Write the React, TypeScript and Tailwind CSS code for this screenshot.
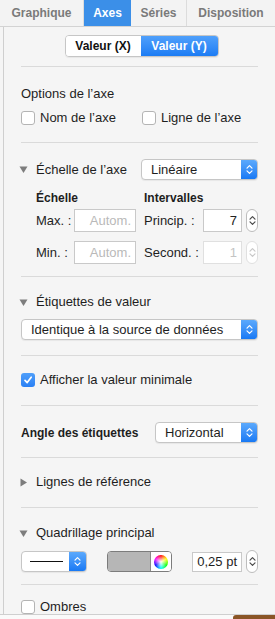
import React from "react";

const Chevrons = ({ color = "white" }: { color?: string }) => (
  <svg width="7" height="11" viewBox="0 0 7 11">
    <path d="M1 4.2 L3.5 1.7 L6 4.2 M1 6.8 L3.5 9.3 L6 6.8" stroke={color} strokeWidth="1.2" fill="none" strokeLinecap="round" strokeLinejoin="round" />
  </svg>
);

const Triangle = ({ right = false }: { right?: boolean }) => (
  <svg width="9" height="9" viewBox="0 0 9 9" className="shrink-0">
    {right ? <path d="M1.5 0.5 L8 4.5 L1.5 8.5 Z" fill="#7d7d7d" /> : <path d="M0.5 1.5 L8.5 1.5 L4.5 8 Z" fill="#7d7d7d" />}
  </svg>
);

const Sep = () => <div className="h-px bg-[#dadada]" />;

const Select = ({ label, className }: { label: string; className: string }) => (
  <div className={`flex h-[21px] rounded-[4px] border border-[#c6c6c6] bg-white shadow-[0_1px_1px_rgba(0,0,0,0.06)] overflow-hidden ${className}`}>
    <span className="flex-1 pl-[9px] leading-[19px] text-[13px] text-[#1e1e1e] whitespace-nowrap">{label}</span>
    <div className="w-[16px] bg-gradient-to-b from-[#5ba9fc] to-[#1779f4] flex items-center justify-center">
      <Chevrons />
    </div>
  </div>
);

const Stepper = ({ disabled = false }: { disabled?: boolean }) => (
  <div className={`w-[12px] h-[23px] rounded-[6px] border bg-white flex items-center justify-center ${disabled ? "border-[#e0e0e0]" : "border-[#bdbdbd]"}`}>
    <Chevrons color={disabled ? "#c8c8c8" : "#4a4a4a"} />
  </div>
);

const Check = ({ checked = false }: { checked?: boolean }) =>
  checked ? (
    <div className="w-[14px] h-[14px] rounded-[3px] bg-gradient-to-b from-[#4f9ffa] to-[#2a80f4] flex items-center justify-center shrink-0">
      <svg width="10" height="10" viewBox="0 0 10 10">
        <path d="M2 5.3 L4.2 7.6 L8.2 2.2" stroke="white" strokeWidth="1.7" fill="none" strokeLinecap="round" strokeLinejoin="round" />
      </svg>
    </div>
  ) : (
    <div className="w-[14px] h-[14px] rounded-[3px] border border-[#b4b4b4] bg-white shrink-0" />
  );

export default function App() {
  return (
    <div className="w-[275px] h-[619px] bg-[#f5f5f5] overflow-hidden text-[#1e1e1e] font-['Liberation_Sans',Arial,sans-serif]">
      <div className="h-[615px] flex flex-col border-b border-[#cfcfcf]">
        {/* tabs */}
        <div className="h-[27px] flex border-b border-[#d3d3d3] bg-[#f3f3f3] text-[12px] font-bold text-[#7a7a7a] shrink-0">
          <div className="w-[84px] flex items-center justify-center border-r border-[#dcdcdc]">Graphique</div>
          <div className="w-[47px] flex items-center justify-center bg-[#3b8fe8] text-white">Axes</div>
          <div className="w-[56px] flex items-center justify-center border-r border-[#dcdcdc]">Séries</div>
          <div className="flex-1 flex items-center justify-center">Disposition</div>
        </div>

        <div className="flex-1 ml-[3px] border-l border-[#cfcfcf] pl-[17px] pr-[17px] overflow-hidden">
          {/* segmented */}
          <div className="mt-[8px] flex justify-center">
            <div className="ml-[4px] flex h-[22px] rounded-[4px] border border-[#c6c6c6] overflow-hidden text-[12px] font-bold shadow-[0_1px_1px_rgba(0,0,0,0.06)]">
              <div className="w-[75px] bg-white flex items-center justify-center text-[#111]">Valeur (X)</div>
              <div className="w-[77px] bg-gradient-to-b from-[#4fa0fb] to-[#1b7cf4] flex items-center justify-center text-white">Valeur (Y)</div>
            </div>
          </div>
          <div className="mt-[9px]"><Sep /></div>

          {/* options */}
          <div className="mt-[17px] h-[20px] flex items-center text-[13px]">Options de l’axe</div>
          <div className="mt-[4px] h-[20px] flex items-center text-[13px]">
            <div className="w-[121px] flex items-center gap-[5px]"><Check />Nom de l’axe</div>
            <div className="flex items-center gap-[5px]"><Check />Ligne de l’axe</div>
          </div>
          <div className="mt-[14px]"><Sep /></div>

          {/* echelle */}
          <div className="mt-[16px] h-[21px] flex items-center text-[13px]">
            <div className="w-[122px] flex items-center gap-[7px] -ml-[2px]">
              <Triangle />
              <span className="ml-[1px]">Échelle de l’axe</span>
            </div>
            <Select label="Linéaire" className="flex-1" />
          </div>
          <div className="mt-[10px] h-[16px] flex items-center text-[12px] font-bold pl-[15px]">
            <div className="w-[108px]">Échelle</div>
            <div>Intervalles</div>
          </div>
          <div className="mt-[3px] h-[23px] flex items-center text-[13px] pl-[15px]">
            <div className="w-[38px]">Max. :</div>
            <div className="w-[62px] h-[23px] border border-[#c9c9c9] bg-white text-right pr-[4px] leading-[21px] text-[#b9b9b9]">Autom.</div>
            <div className="ml-[8px] w-[59px]">Princip. :</div>
            <div className="w-[39px] h-[23px] border border-[#c9c9c9] bg-white text-right pr-[4px] leading-[21px] text-[#222]">7</div>
            <div className="ml-[4px]"><Stepper /></div>
          </div>
          <div className="mt-[9px] h-[23px] flex items-center text-[13px] pl-[15px]">
            <div className="w-[38px]">Min. :</div>
            <div className="w-[62px] h-[23px] border border-[#c9c9c9] bg-white text-right pr-[4px] leading-[21px] text-[#b9b9b9]">Autom.</div>
            <div className="ml-[8px] w-[59px]">Second. :</div>
            <div className="w-[39px] h-[23px] border border-[#e0e0e0] bg-white text-right pr-[4px] leading-[21px] text-[#c4c4c4]">1</div>
            <div className="ml-[4px]"><Stepper disabled /></div>
          </div>
          <div className="mt-[12px]"><Sep /></div>

          {/* etiquettes */}
          <div className="mt-[15px] h-[20px] flex items-center gap-[8px] -ml-[2px] text-[13px]">
            <Triangle />
            <span>Étiquettes de valeur</span>
          </div>
          <div className="mt-[7px]">
            <Select label="Identique à la source de données" className="w-full" />
          </div>
          <div className="mt-[15px]"><Sep /></div>

          <div className="mt-[14px] h-[20px] flex items-center gap-[5px] text-[13px]">
            <Check checked />
            Afficher la valeur minimale
          </div>
          <div className="mt-[15px]"><Sep /></div>

          {/* angle */}
          <div className="mt-[16px] h-[21px] flex items-center">
            <div className="w-[134px] text-[12px] font-bold">Angle des étiquettes</div>
            <Select label="Horizontal" className="flex-1" />
          </div>
          <div className="mt-[14px]"><Sep /></div>

          <div className="mt-[14px] h-[20px] flex items-center gap-[8px] -ml-[2px] text-[13px]">
            <Triangle right />
            <span>Lignes de référence</span>
          </div>
          <div className="mt-[15px]"><Sep /></div>

          {/* quadrillage */}
          <div className="mt-[15px] h-[20px] flex items-center gap-[8px] -ml-[2px] text-[13px]">
            <Triangle />
            <span>Quadrillage principal</span>
          </div>
          <div className="mt-[8px] h-[21px] flex items-center">
            <div className="w-[66px] h-[21px] flex rounded-[4px] border border-[#c6c6c6] bg-white overflow-hidden shadow-[0_1px_1px_rgba(0,0,0,0.06)]">
              <div className="flex-1 flex items-center pl-[8px] pr-[6px]">
                <div className="h-[1.5px] w-full bg-[#111]" />
              </div>
              <div className="w-[17px] bg-gradient-to-b from-[#5ba9fc] to-[#1779f4] flex items-center justify-center">
                <Chevrons />
              </div>
            </div>
            <div className="ml-[20px] w-[66px] h-[21px] flex rounded-[4px] border border-[#7c7c7c] overflow-hidden">
              <div className="flex-1 bg-[#b6b6b6] border-r border-[#8a8a8a]" />
              <div className="w-[20px] bg-white flex items-center justify-center">
                <div className="w-[14px] h-[14px] rounded-full bg-[radial-gradient(circle,white_0%,rgba(255,255,255,0)_70%),conic-gradient(#f00,#ff0,#0f0,#0ff,#00f,#f0f,#f00)]" />
              </div>
            </div>
            <div className="ml-[20px] w-[50px] h-[20px] border border-[#c9c9c9] bg-white text-right pr-[4px] leading-[18px] text-[13px]">0,25 pt</div>
            <div className="ml-[4px]"><Stepper /></div>
          </div>
          <div className="mt-[12px]"><Sep /></div>

          <div className="mt-[14px] h-[16px] flex items-center gap-[5px] text-[13px]">
            <Check />
            Ombres
          </div>
        </div>
      </div>
      <div className="h-[4px] flex justify-end bg-[#fafafa]">
        <div className="w-[42px] bg-[#8a5526] rounded-tl-[3px]" />
      </div>
    </div>
  );
}
